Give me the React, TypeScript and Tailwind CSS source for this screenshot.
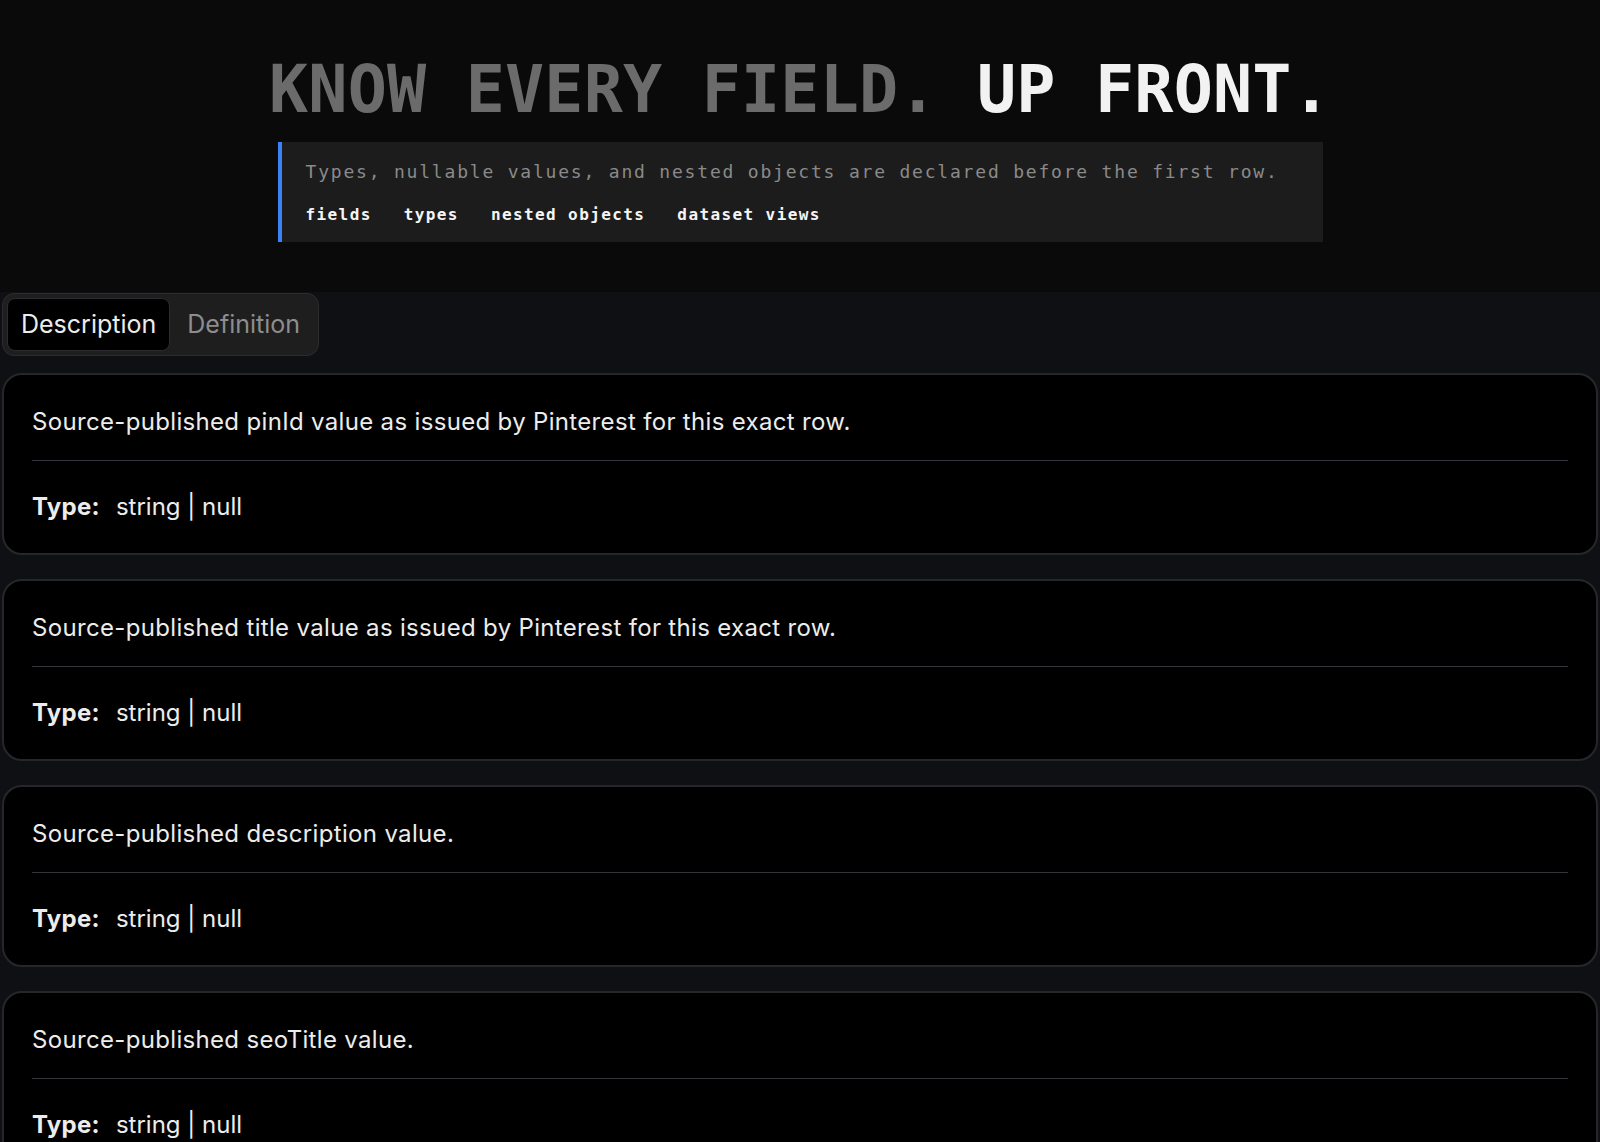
const fields = [
  "Source-published pinId value as issued by Pinterest for this exact row.",
  "Source-published title value as issued by Pinterest for this exact row.",
  "Source-published description value.",
  "Source-published seoTitle value.",
  "Source-published seoDescription value.",
];

const tags = ["fields", "types", "nested objects", "dataset views"];

function FieldCard({ text }: { text: string }) {
  return (
    <div className="rounded-[20px] border-2 border-[#26272a] bg-black p-7 text-[24px] leading-9 text-[#ececec]">
      <p className="border-b border-[#34353a] pt-[1px] pb-[20px] tracking-[0.33px]">{text}</p>
      <div className="pt-7">
        <span className="mr-[16px] font-bold tracking-[0.3px]">Type:</span>
        string | null
      </div>
    </div>
  );
}

export default function App() {
  return (
    <div className="h-screen overflow-hidden bg-[#0f1013] font-['Inter',sans-serif]">
      {/* Hero */}
      <div className="flex flex-col items-center bg-[#0a0a0a] pt-[57px] pb-[50px] font-['DejaVu_Sans_Mono',monospace]">
        <h1 className="text-[65px] font-bold leading-none tracking-[0.2px] whitespace-pre">
          <span className="text-[#6b6b6b]">KNOW EVERY FIELD. </span>
          <span className="text-[#f2f2f2]">UP FRONT.</span>
        </h1>
        <div className="mt-5 w-[1045px] border-l-4 border-[#3b82f6] bg-[#1c1c1c] pt-[18px] pb-[15px] pl-6 pr-6">
          <p className="text-[18px] leading-6 tracking-[1.8px] text-[#8a8a8a]">
            Types, nullable values, and nested objects are declared before the first row.
          </p>
          <div className="mt-[19px] flex gap-8 text-[16px] font-bold leading-6 tracking-[1.4px] text-[#f5f5f5]">
            {tags.map((t) => (
              <span key={t}>{t}</span>
            ))}
          </div>
        </div>
      </div>

      {/* Field list */}
      <div className="px-[2px] pt-[1px]">
        <div className="inline-flex gap-[3px] rounded-xl border border-[#2c2c2e] bg-[#1e1e1f] p-1">
          <button
            type="button"
            className="rounded-lg border border-[#2c2c2e] bg-black px-[13px] py-2 text-[25px] leading-[35px] text-[#ececec]"
          >
            Description
          </button>
          <button
            type="button"
            className="rounded-lg border border-transparent px-[13px] py-2 text-[25px] leading-[35px] text-[#8d8d8d]"
          >
            Definition
          </button>
        </div>

        <div className="mt-[17px] flex flex-col gap-6">
          {fields.map((f) => (
            <FieldCard key={f} text={f} />
          ))}
        </div>
      </div>
    </div>
  );
}
